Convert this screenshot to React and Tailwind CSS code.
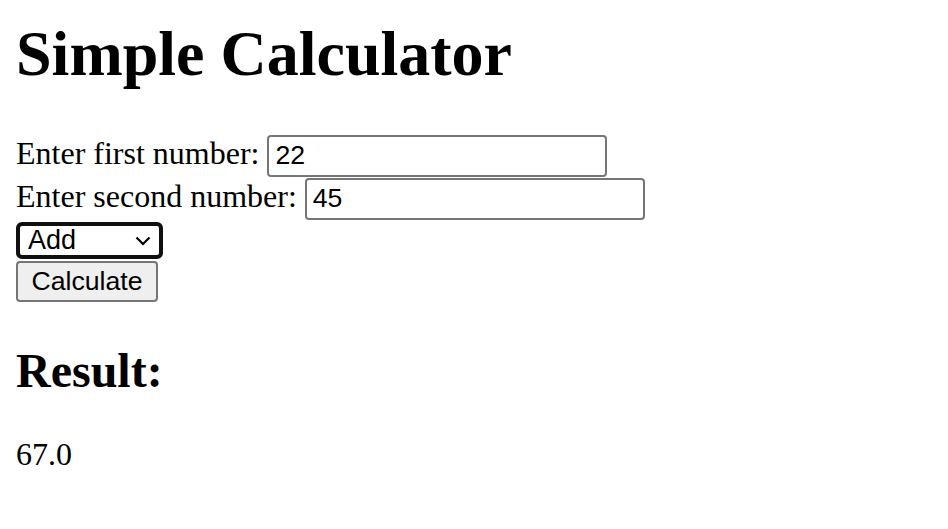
import React from 'react';

const inputClass =
  "h-[42px] w-[340px] rounded-[4px] border-2 border-[#767676] px-[6px] font-['Liberation_Sans',Arial,sans-serif] text-[26.67px]";

const App = () => {
  return (
    <div className="min-h-screen bg-white px-4 font-['Liberation_Serif',serif] text-[32px] leading-normal text-black">
      <h1 className="mb-[27px] mt-[6px] text-[64px] font-bold leading-normal">Simple Calculator</h1>
      <form onSubmit={(e) => e.preventDefault()}>
        <div className="flex h-[43px] items-baseline">
          <label className="mr-[8px]">Enter first number:</label>
          <input type="text" defaultValue="22" className={inputClass} />
        </div>
        <div className="flex h-[43px] items-baseline">
          <label className="mr-[8px]">Enter second number:</label>
          <input type="text" defaultValue="45" className={inputClass} />
        </div>
        <div className="flex h-[46px] items-start pt-[7px]">
          <span className="flex h-[37px] w-[147px] items-center justify-between rounded-[6px] border-4 border-[#101010] pl-[8px] pr-[8px] font-['Liberation_Sans',Arial,sans-serif] text-[27px] leading-none">
            <span>Add</span>
            <svg width="16" height="10" viewBox="0 0 16 10" fill="none" stroke="black" strokeWidth="2.2">
              <path d="M1.5 1.5 L8 8 L14.5 1.5" />
            </svg>
          </span>
        </div>
        <button
          type="submit"
          className="block h-[41px] w-[142px] rounded-[4px] border-2 border-[#767676] bg-[#efefef] font-['Liberation_Sans',Arial,sans-serif] text-[26.67px] leading-none"
        >
          Calculate
        </button>
      </form>
      <h2 className="mb-[23px] mt-[33px] text-[48px] font-bold leading-normal">Result:</h2>
      <p className="mt-[23px]">67.0</p>
    </div>
  );
};

export default App;
